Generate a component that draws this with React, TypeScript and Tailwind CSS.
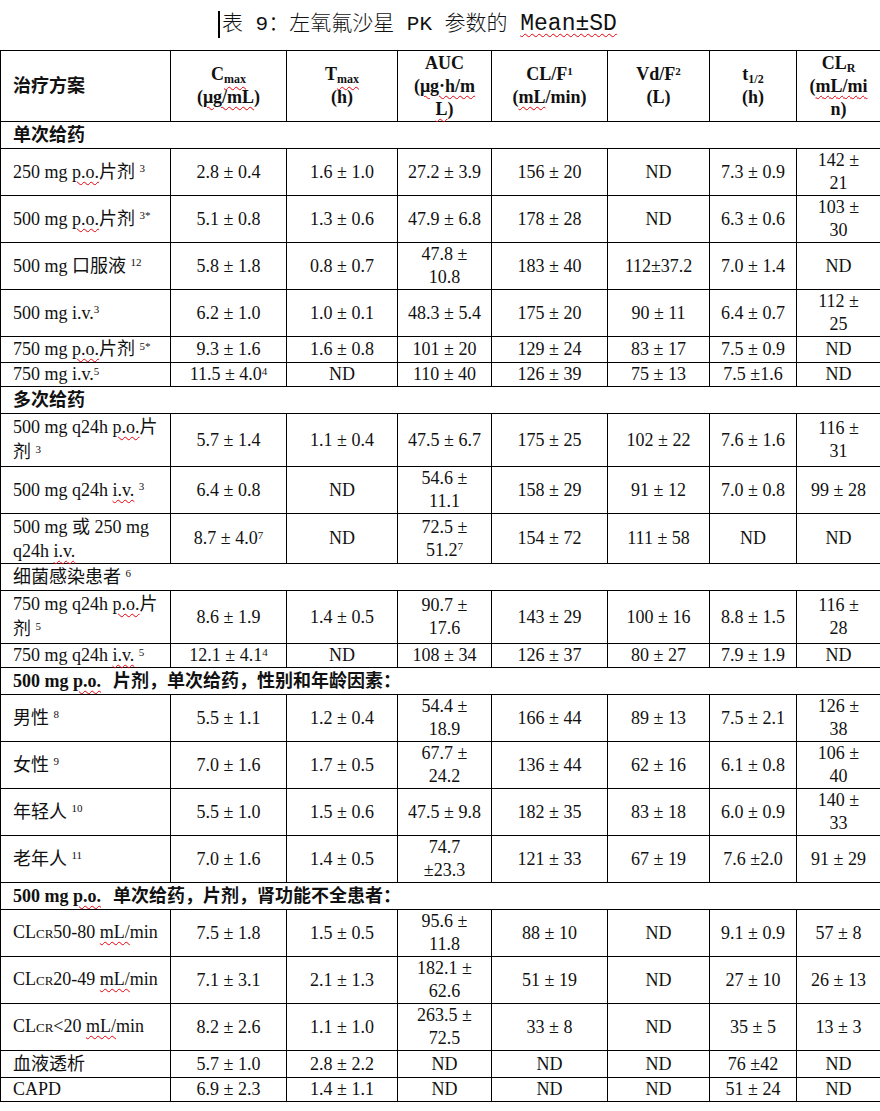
import React from 'react';

type Row =
  | { kind: 'section'; h: string; bold: boolean; label: React.ReactNode }
  | { kind: 'data'; h: string; lead?: string; first: React.ReactNode; values: string[] };

const W = ({ children }: { children: React.ReactNode }) => (
  <span className="underline decoration-wavy decoration-red-600 decoration-1 underline-offset-[3px]">{children}</span>
);

const Sup = ({ children }: { children: React.ReactNode }) => <sup className="text-[11px]">{children}</sup>;

const CLcr = ({ rest }: { rest: string }) => (
  <>
    CL<span className="text-[13px]">CR</span>
    {rest} <W>mL/</W>min
  </>
);

// "a\nb" -> two lines, "x^7" -> superscript
const renderValue = (s: string) => {
  const lines = s.split('\n');
  return lines.map((line, i) => {
    const m = line.match(/^(.*)\^(\S+)$/);
    return (
      <React.Fragment key={i}>
        {m ? (
          <>
            {m[1]}
            <Sup>{m[2]}</Sup>
          </>
        ) : (
          line
        )}
        {i < lines.length - 1 && <br />}
      </React.Fragment>
    );
  });
};

const rows: Row[] = [
  { kind: 'section', h: 'h-[27px]', bold: true, label: '单次给药' },
  {
    kind: 'data', h: 'h-[47px]',
    first: <>250 mg <W>p.o.</W>片剂 <Sup>3</Sup></>,
    values: ['2.8 ± 0.4', '1.6 ± 1.0', '27.2 ± 3.9', '156 ± 20', 'ND', '7.3 ± 0.9', '142 ±\n21'],
  },
  {
    kind: 'data', h: 'h-[47px]',
    first: <>500 mg <W>p.o.</W>片剂 <Sup>3*</Sup></>,
    values: ['5.1 ± 0.8', '1.3 ± 0.6', '47.9 ± 6.8', '178 ± 28', 'ND', '6.3 ± 0.6', '103 ±\n30'],
  },
  {
    kind: 'data', h: 'h-[47px]',
    first: <>500 mg 口服液 <Sup>12</Sup></>,
    values: ['5.8 ± 1.8', '0.8 ± 0.7', '47.8 ±\n10.8', '183 ± 40', '112±37.2', '7.0 ± 1.4', 'ND'],
  },
  {
    kind: 'data', h: 'h-[47px]',
    first: <>500 mg i.v.<Sup>3</Sup></>,
    values: ['6.2 ± 1.0', '1.0 ± 0.1', '48.3 ± 5.4', '175 ± 20', '90 ± 11', '6.4 ± 0.7', '112 ±\n25'],
  },
  {
    kind: 'data', h: 'h-[26px]',
    first: <>750 mg <W>p.o.</W>片剂 <Sup>5*</Sup></>,
    values: ['9.3 ± 1.6', '1.6 ± 0.8', '101 ± 20', '129 ± 24', '83 ± 17', '7.5 ± 0.9', 'ND'],
  },
  {
    kind: 'data', h: 'h-[24px]',
    first: <>750 mg i.v.<Sup>5</Sup></>,
    values: ['11.5 ± 4.0^4', 'ND', '110 ± 40', '126 ± 39', '75 ± 13', '7.5 ±1.6', 'ND'],
  },
  { kind: 'section', h: 'h-[27px]', bold: true, label: '多次给药' },
  {
    kind: 'data', h: 'h-[53px]', lead: 'leading-[25px]',
    first: <>500 mg q24h <W>p.o.</W>片<br />剂 <Sup>3</Sup></>,
    values: ['5.7 ± 1.4', '1.1 ± 0.4', '47.5 ± 6.7', '175 ± 25', '102 ± 22', '7.6 ± 1.6', '116 ±\n31'],
  },
  {
    kind: 'data', h: 'h-[47px]',
    first: <>500 mg q24h <W>i.v.</W> <Sup>3</Sup></>,
    values: ['6.4 ± 0.8', 'ND', '54.6 ±\n11.1', '158 ± 29', '91 ± 12', '7.0 ± 0.8', '99 ± 28'],
  },
  {
    kind: 'data', h: 'h-[50px]', lead: 'leading-[24px]',
    first: <>500 mg 或 250 mg<br />q24h <W>i.v.</W></>,
    values: ['8.7 ± 4.0^7', 'ND', '72.5 ±\n51.2^7', '154 ± 72', '111 ± 58', 'ND', 'ND'],
  },
  { kind: 'section', h: 'h-[27px]', bold: false, label: <>细菌感染患者 <Sup>6</Sup></> },
  {
    kind: 'data', h: 'h-[53px]', lead: 'leading-[25px]',
    first: <>750 mg q24h <W>p.o.</W>片<br />剂 <Sup>5</Sup></>,
    values: ['8.6 ± 1.9', '1.4 ± 0.5', '90.7 ±\n17.6', '143 ± 29', '100 ± 16', '8.8 ± 1.5', '116 ±\n28'],
  },
  {
    kind: 'data', h: 'h-[24px]',
    first: <>750 mg q24h <W>i.v.</W> <Sup>5</Sup></>,
    values: ['12.1 ± 4.1^4', 'ND', '108 ± 34', '126 ± 37', '80 ± 27', '7.9 ± 1.9', 'ND'],
  },
  {
    kind: 'section', h: 'h-[27px]', bold: true,
    label: <>500 mg <W>p.o.</W><span className="ml-[12px]">片剂，单次给药，性别和年龄因素：</span></>,
  },
  {
    kind: 'data', h: 'h-[47px]',
    first: <>男性 <Sup>8</Sup></>,
    values: ['5.5 ± 1.1', '1.2 ± 0.4', '54.4 ±\n18.9', '166 ± 44', '89 ± 13', '7.5 ± 2.1', '126 ±\n38'],
  },
  {
    kind: 'data', h: 'h-[47px]',
    first: <>女性 <Sup>9</Sup></>,
    values: ['7.0 ± 1.6', '1.7 ± 0.5', '67.7 ±\n24.2', '136 ± 44', '62 ± 16', '6.1 ± 0.8', '106 ±\n40'],
  },
  {
    kind: 'data', h: 'h-[47px]',
    first: <>年轻人 <Sup>10</Sup></>,
    values: ['5.5 ± 1.0', '1.5 ± 0.6', '47.5 ± 9.8', '182 ± 35', '83 ± 18', '6.0 ± 0.9', '140 ±\n33'],
  },
  {
    kind: 'data', h: 'h-[47px]',
    first: <>老年人 <Sup>11</Sup></>,
    values: ['7.0 ± 1.6', '1.4 ± 0.5', '74.7\n±23.3', '121 ± 33', '67 ± 19', '7.6 ±2.0', '91 ± 29'],
  },
  {
    kind: 'section', h: 'h-[27px]', bold: true,
    label: <>500 mg <W>p.o.</W><span className="ml-[12px]">单次给药，片剂，肾功能不全患者：</span></>,
  },
  {
    kind: 'data', h: 'h-[47px]',
    first: <CLcr rest="50-80" />,
    values: ['7.5 ± 1.8', '1.5 ± 0.5', '95.6 ±\n11.8', '88 ± 10', 'ND', '9.1 ± 0.9', '57 ± 8'],
  },
  {
    kind: 'data', h: 'h-[47px]',
    first: <CLcr rest="20-49" />,
    values: ['7.1 ± 3.1', '2.1 ± 1.3', '182.1 ±\n62.6', '51 ± 19', 'ND', '27 ± 10', '26 ± 13'],
  },
  {
    kind: 'data', h: 'h-[47px]',
    first: <CLcr rest="<20" />,
    values: ['8.2 ± 2.6', '1.1 ± 1.0', '263.5 ±\n72.5', '33 ± 8', 'ND', '35 ± 5', '13 ± 3'],
  },
  {
    kind: 'data', h: 'h-[27px]',
    first: <>血液透析</>,
    values: ['5.7 ± 1.0', '2.8 ± 2.2', 'ND', 'ND', 'ND', '76 ±42', 'ND'],
  },
  {
    kind: 'data', h: 'h-[24px]',
    first: <>CAPD</>,
    values: ['6.9 ± 2.3', '1.4 ± 1.1', 'ND', 'ND', 'ND', '51 ± 24', 'ND'],
  },
];

const th = 'border border-black text-center align-middle font-bold px-1';
const td = 'border border-black text-center align-middle px-1';

export default function App() {
  return (
    <div className="w-[880px] h-[1111px] bg-white text-[#111] overflow-hidden">
      {/* Title */}
      <div className="h-[50px] flex items-center pl-[218px] pb-[2px]">
        <span className="inline-block w-[2px] h-[27px] bg-black mr-[2px]" />
        <span
          className="text-[21px] leading-none font-light whitespace-nowrap"
          style={{ fontFamily: '"Liberation Mono", "Noto Sans CJK SC", monospace' }}
        >
          表 9：左氧氟沙星 PK 参数的 <span className="text-[23px]"><W>Mean±SD</W></span>
        </span>
      </div>

      <table
        className="w-[880px] table-fixed border-collapse text-[18px] leading-[23px]"
        style={{ fontFamily: '"Liberation Serif", "Noto Sans CJK SC", serif' }}
      >
        <colgroup>
          <col className="w-[170px]" />
          <col className="w-[116px]" />
          <col className="w-[111px]" />
          <col className="w-[94px]" />
          <col className="w-[116px]" />
          <col className="w-[102px]" />
          <col className="w-[87px]" />
          <col className="w-[84px]" />
        </colgroup>
        <tbody>
          <tr className="h-[71px]">
            <th className="border border-black text-left align-middle font-bold pl-[12px]">治疗方案</th>
            <th className={th}>
              C<sub className="text-[12px]"><W>max</W></sub>
              <br />
              (<W>μg/mL</W>)
            </th>
            <th className={th}>
              T<sub className="text-[12px]"><W>max</W></sub>
              <br />
              (h)
            </th>
            <th className={th}>
              AUC
              <br />
              (<W>μg·h/m</W>
              <br />
              <W>L</W>)
            </th>
            <th className={th}>
              CL/F<Sup>1</Sup>
              <br />
              (<W>mL</W>/min)
            </th>
            <th className={th}>
              Vd/F<Sup>2</Sup>
              <br />
              (L)
            </th>
            <th className={th}>
              t<sub className="text-[12px]">1/2</sub>
              <br />
              (h)
            </th>
            <th className={th}>
              CL<sub className="text-[12px]">R</sub>
              <br />
              (<W>mL/mi</W>
              <br />
              n)
            </th>
          </tr>
          {rows.map((r, i) =>
            r.kind === 'section' ? (
              <tr key={i} className={r.h}>
                <td
                  colSpan={8}
                  className={`border border-black align-middle text-left pl-[12px] ${r.bold ? 'font-bold' : ''}`}
                >
                  {r.label}
                </td>
              </tr>
            ) : (
              <tr key={i} className={r.h}>
                <td className={`border border-black align-middle text-left pl-[12px] pr-1 ${r.lead ?? ''}`}>
                  {r.first}
                </td>
                {r.values.map((v, j) => (
                  <td key={j} className={td}>
                    {renderValue(v)}
                  </td>
                ))}
              </tr>
            )
          )}
        </tbody>
      </table>
    </div>
  );
}
